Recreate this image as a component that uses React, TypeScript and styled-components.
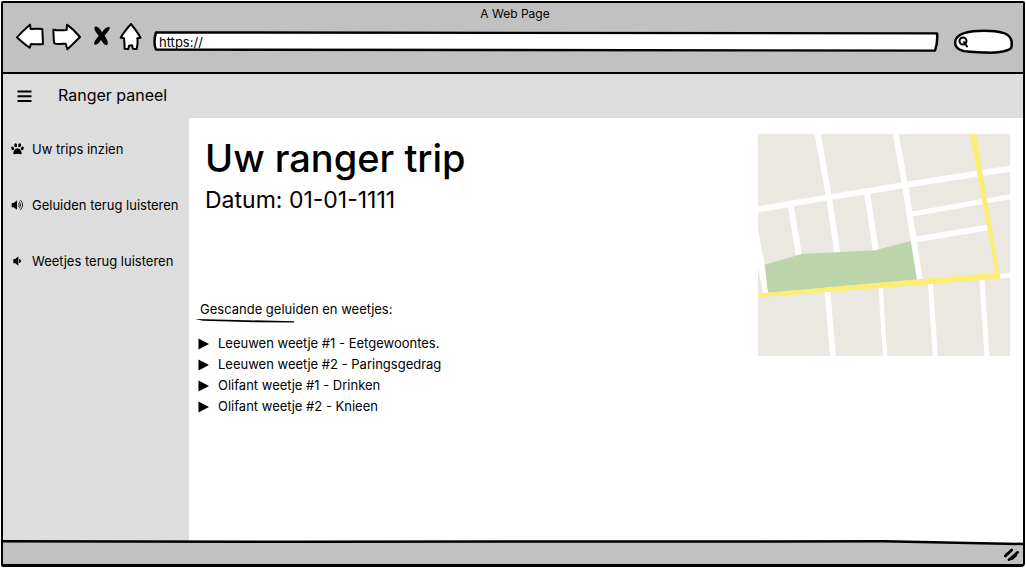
import React from "react";
import styled, { createGlobalStyle } from "styled-components";

const GlobalStyle = createGlobalStyle`
  *, *::before, *::after { box-sizing: border-box; }
  body { margin: 0; background: #fff; color: #000; font-family: Inter, "Open Sans", sans-serif; }
  h1, h2, p, ul { margin: 0; padding: 0; font-weight: 400; }
  ul { list-style: none; }
`;

const Page = styled.div`
  min-height: 100vh;
  padding: 1px;
  display: flex;
  flex-direction: column;
`;

const Browser = styled.div`
  flex: 1;
  display: flex;
  flex-direction: column;
  border: 2px solid #000;
  border-bottom-width: 3px;
  border-radius: 2px 2px 4px 2px;
`;

const Chrome = styled.header`
  background: #c1c1c1;
  border-bottom: 2px solid #000;
  padding: 2px 9px 19px 13px;
`;

const WindowTitle = styled.p`
  font-size: 12px;
  line-height: 18px;
  text-align: center;
`;

const Toolbar = styled.div`
  display: flex;
  align-items: flex-start;
  height: 30px;
`;

const NavButtons = styled.nav`
  display: flex;
  align-items: center;
  gap: 8px;
  margin-right: 10px;
`;

const IconButton = styled.button`
  display: flex;
  padding: 0;
  border: 0;
  background: none;
  cursor: pointer;
`;

const Field = styled.div<{ $grow?: boolean }>`
  position: relative;
  display: flex;
  align-items: center;
  margin-top: ${(p) => (p.$grow ? 8 : 6)}px;
  height: ${(p) => (p.$grow ? 21 : 25)}px;
  ${(p) => (p.$grow ? "flex: 1; padding: 0 6px;" : "width: 62px; margin-left: 14px; padding: 0 6px;")}
`;

const Outline = styled.svg`
  position: absolute;
  inset: 0;
  width: 100%;
  height: 100%;
  overflow: visible;
`;

const TextInput = styled.input`
  position: relative;
  flex: 1;
  min-width: 0;
  padding: 0;
  border: 0;
  outline: 0;
  background: transparent;
  color: #000;
  font: 13px/18px Inter, "Open Sans", sans-serif;
`;

const SearchIcon = styled.svg`
  position: relative;
  flex: none;
`;

const AppBar = styled.div`
  display: flex;
  align-items: center;
  height: 44px;
  padding-left: 14px;
  gap: 26px;
  background: #ddd;
`;

const AppTitle = styled.p`
  padding-bottom: 2px;
  font-size: 16px;
  line-height: 24px;
`;

const Body = styled.div`
  flex: 1;
  display: flex;
`;

const Sidebar = styled.nav`
  width: 186px;
  flex: none;
  padding-top: 21px;
  background: #ddd;
`;

const SideList = styled.ul`
  display: flex;
  flex-direction: column;
  gap: 36px;
`;

const SideLink = styled.a`
  display: flex;
  align-items: center;
  gap: 8px;
  padding-left: 8px;
  color: #000;
  font-size: 13px;
  line-height: 20px;
  text-decoration: none;
  white-space: nowrap;
`;

const Main = styled.main`
  flex: 1;
  display: flex;
  align-items: flex-start;
  justify-content: space-between;
  padding: 16px 13px 16px 16px;
  background: #fff;
`;

const Heading = styled.h1`
  font-size: 38px;
  line-height: 48px;
  font-weight: 500;
`;

const DateLine = styled.p`
  font-size: 23px;
  line-height: 36px;
`;

const Section = styled.section`
  margin: 82px 0 0 -10px;
`;

const SectionTitle = styled.h2`
  padding-left: 5px;
  font-size: 13px;
  line-height: 19px;
`;

const Underline = styled.svg`
  display: block;
`;

const FactList = styled.ul`
  margin-top: 10px;
`;

const FactButton = styled.button`
  display: flex;
  align-items: center;
  gap: 9px;
  padding: 0 0 0 3px;
  border: 0;
  background: none;
  color: #000;
  font: 13px/21px Inter, "Open Sans", sans-serif;
  cursor: pointer;
`;

const MapDrawing = styled.svg`
  flex: none;
  display: block;
`;

const StatusBar = styled.footer`
  display: flex;
  flex-direction: column;
  background: #c1c1c1;
`;

const StatusRule = styled.svg`
  display: block;
  width: 100%;
  height: 6px;
`;

const Grip = styled.svg`
  align-self: flex-end;
  margin: 2px 3px 2px 0;
`;

const sketch = { fill: "#fff", stroke: "#000", strokeWidth: 6, strokeLinejoin: "round" as const, strokeLinecap: "round" as const };

const BackIcon = () => (
  <svg width="28" height="28" viewBox="47 69 84 84">
    <path {...sketch} d="M50 112C62 98 77 84 89 74L91 87C103 86 116 86 126 87L128 132C116 134 103 133 92 132L88 143C74 134 60 121 50 112Z" />
  </svg>
);

const ForwardIcon = () => (
  <svg width="29" height="28" viewBox="157 69 87 84">
    <path {...sketch} d="M161 89C173 91 188 91 201 90L202 74C216 84 231 99 241 111C229 123 214 138 203 148L198 131C188 131 176 134 164 130C161 117 162 102 161 89Z" />
  </svg>
);

const StopIcon = () => (
  <svg width="22" height="28" viewBox="267 69 66 84">
    <path d="M284 81C291 76 300 86 306 97C313 86 322 78 329 82C331 89 320 99 314 107C321 116 326 128 322 134C314 138 308 127 303 119C298 128 290 137 283 133C280 127 290 115 296 107C290 99 281 90 284 81Z" />
  </svg>
);

const HomeIcon = () => (
  <svg width="24" height="28" viewBox="355 69 72 84">
    <path {...sketch} d="M391 72C400 83 412 99 420 113L410 115C412 126 410 138 408 147L397 146L394 136L385 137L383 147L372 146C372 136 371 126 370 115L360 113C368 99 381 83 391 72Z" />
  </svg>
);

const MenuIcon = () => (
  <svg width="15" height="14" viewBox="0 0 15 14">
    <path d="M0.500 2.500h14M0.500 7.200h14M0.500 12h14" stroke="#000" strokeWidth="2" />
  </svg>
);

const PawIcon = () => (
  <svg width="13" height="12" viewBox="0 0 39 36">
    <ellipse cx="14" cy="7" rx="4.4" ry="6" transform="rotate(-8 14 7)" />
    <ellipse cx="26" cy="7" rx="4.4" ry="6" transform="rotate(8 26 7)" />
    <ellipse cx="5" cy="16" rx="4" ry="5.5" transform="rotate(-25 5 16)" />
    <ellipse cx="34" cy="16" rx="4" ry="5.5" transform="rotate(25 34 16)" />
    <path d="M19.500 16C26 16 32 25 32 30C32 36 25 33 19.500 32C14 33 7 36 7 30C7 25 13 16 19.500 16Z" />
  </svg>
);

const SpeakerIcon = ({ loud }: { loud?: boolean }) => (
  <svg width="13" height="12" viewBox="0 0 39 36">
    {loud ? (
      <>
        <path d="M2 12H8L18 4V32L8 25H2Z" />
        <path d="M22 13Q27 18 22 23M25 8Q33 18 25 28M28 3Q42 18 28 33" fill="none" stroke="#000" strokeWidth="2.500" />
      </>
    ) : (
      <>
        <path d="M7 12H13L22 4V32L13 25H7Z" />
        <path d="M26 13Q31 18 26 23Z" stroke="#000" strokeWidth="3" />
      </>
    )}
  </svg>
);

const PlayIcon = () => (
  <svg width="11" height="12" viewBox="0 0 11 12">
    <path d="M0.500 0.500L11 6L0.500 11.500Z" />
  </svg>
);

const CityMap = () => (
  <MapDrawing width="252" height="222" viewBox="24 27 756 666" role="img" aria-label="Kaart">
    <rect x="24" y="27" width="756" height="666" fill="#ebe8e1" />
    <g fill="none" stroke="#fff" strokeWidth="18">
      <path d="M24 253L235 217L465 180L780 131" />
      <path d="M203 27L237 217L262 385" />
      <path d="M437 27L465 180L510 466" />
      <path d="M123 245L147 392" />
      <path d="M351 203L378 378" />
      <path d="M482 268L780 215" strokeWidth="15" />
      <path d="M496 344L716 307" strokeWidth="17" />
      <path d="M745 454L780 451" strokeWidth="14" />
      <path d="M232 498L249 693" strokeWidth="17" />
      <path d="M392 485L405 693" strokeWidth="13" />
      <path d="M541 475L556 693" strokeWidth="15" />
      <path d="M696 465L711 693" strokeWidth="15" />
    </g>
    <path d="M24 315L45 420L54 504L39 505L24 430Z" fill="#fff" />
    <path d="M24 430L39 505L24 506Z" fill="#ebe8e1" />
    <path d="M44 419L155 387L375 376L482 348L501 464L54 503Z" fill="#bbd4ab" />
    <path d="M24 506L400 472L737 443L659 27H678L751 461L500 481L24 517Z" fill="#faee74" />
  </MapDrawing>
);

const facts = [
  "Leeuwen weetje #1 - Eetgewoontes.",
  "Leeuwen weetje #2 - Paringsgedrag",
  "Olifant weetje #1 - Drinken",
  "Olifant weetje #2 - Knieen",
];

const links = [
  { label: "Uw trips inzien", icon: <PawIcon /> },
  { label: "Geluiden terug luisteren", icon: <SpeakerIcon loud /> },
  { label: "Weetjes terug luisteren", icon: <SpeakerIcon /> },
];

export default function App() {
  return (
    <Page>
      <GlobalStyle />
      <Browser>
        <Chrome>
          <WindowTitle>A Web Page</WindowTitle>
          <Toolbar>
            <NavButtons aria-label="Browser">
              <IconButton aria-label="Back"><BackIcon /></IconButton>
              <IconButton aria-label="Forward"><ForwardIcon /></IconButton>
              <IconButton aria-label="Stop"><StopIcon /></IconButton>
              <IconButton aria-label="Home"><HomeIcon /></IconButton>
            </NavButtons>
            <Field $grow>
              <Outline viewBox="0 0 785 22" preserveAspectRatio="none" aria-hidden="true">
                <path d="M3 1.500L784 2.500Q785 12 782 20.500L3 19.500Q0 12 3 1.500Z" fill="#fff" stroke="#000" strokeWidth="2.500" strokeLinejoin="round" />
              </Outline>
              <TextInput aria-label="Address" defaultValue="https://" />
            </Field>
            <Field>
              <Outline viewBox="0 0 62 26" preserveAspectRatio="none" aria-hidden="true">
                <path d="M13 4C22 1 42 1 51 4C59 6 61 13 59 20C54 24 42 25 34 24.500C25 24 18 24 12 23C0 20 0 8 13 4Z" fill="#fff" stroke="#000" strokeWidth="2.500" />
              </Outline>
              <SearchIcon width="11" height="12" viewBox="0 0 11 12" aria-hidden="true">
                <circle cx="5" cy="5" r="3.500" fill="none" stroke="#000" strokeWidth="2" />
                <path d="M6 6L9 10.500" stroke="#000" strokeWidth="2" strokeLinecap="round" />
              </SearchIcon>
              <TextInput type="search" aria-label="Search" />
            </Field>
          </Toolbar>
        </Chrome>
        <AppBar>
          <IconButton aria-label="Menu"><MenuIcon /></IconButton>
          <AppTitle>Ranger paneel</AppTitle>
        </AppBar>
        <Body>
          <Sidebar aria-label="Ranger paneel">
            <SideList>
              {links.map((l) => (
                <li key={l.label}>
                  <SideLink href="#">{l.icon}{l.label}</SideLink>
                </li>
              ))}
            </SideList>
          </Sidebar>
          <Main>
            <div>
              <Heading>Uw ranger trip</Heading>
              <DateLine>Datum: 01-01-1111</DateLine>
              <Section>
                <SectionTitle>Gescande geluiden en weetjes:</SectionTitle>
                <Underline width="100" height="4" viewBox="0 0 100 4" aria-hidden="true">
                  <path d="M0 0L22 0.600L99 2.200V3.500L60 3.200L8 1.800Z" />
                </Underline>
                <FactList>
                  {facts.map((f) => (
                    <li key={f}>
                      <FactButton><PlayIcon />{f}</FactButton>
                    </li>
                  ))}
                </FactList>
              </Section>
            </div>
            <CityMap />
          </Main>
        </Body>
        <StatusBar>
          <StatusRule viewBox="0 0 1020 6" preserveAspectRatio="none" aria-hidden="true">
            <path d="M0 0H186V2H0Z" fill="#ddd" />
            <path d="M186 0H1020V4L880 1H186Z" fill="#fff" />
            <path d="M0 1.300L300 1.800L880 1.300L1020 4" fill="none" stroke="#000" strokeWidth="2.500" />
          </StatusRule>
          <Grip width="16" height="14" viewBox="434 85 48 42" aria-hidden="true">
            <path d="M438 109L457 91M449 120L475 98" stroke="#000" strokeWidth="8" strokeLinecap="round" />
            <path d="M440 105L452 96M458 118L470 107" stroke="#000" strokeWidth="7" strokeLinecap="round" />
          </Grip>
        </StatusBar>
      </Browser>
    </Page>
  );
}
